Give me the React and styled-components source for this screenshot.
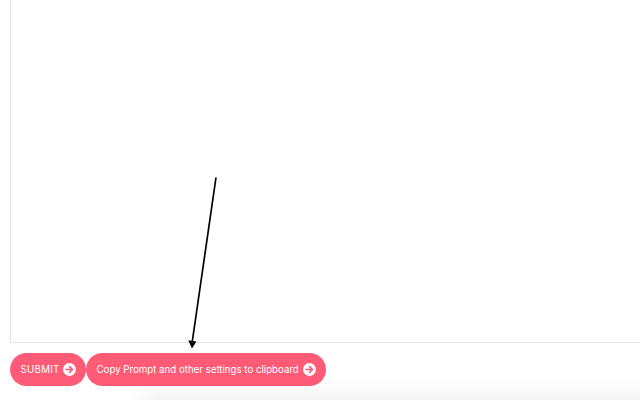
import { createGlobalStyle, styled } from "styled-components";

const GlobalStyle = createGlobalStyle`
  html, body {
    margin: 0;
    height: 100%;
    background: #fff;
    overflow: hidden;
  }
`;

const Page = styled.div`
  position: relative;
  width: 640px;
  height: 400px;
  overflow: hidden;
  padding-left: 10px;
  box-sizing: border-box;
  display: flex;
  flex-direction: column;
  font-family: Inter, "Liberation Sans", sans-serif;
`;

const Canvas = styled.div`
  height: 343px;
  box-sizing: border-box;
  border-left: 1px solid #e6e6e6;
  border-bottom: 1px solid #e6e6e6;
`;

const Actions = styled.div`
  display: flex;
  margin-top: 10px;
`;

const PillButton = styled.button`
  display: flex;
  align-items: center;
  gap: 5px;
  height: 33px;
  width: ${props => props.$width}px;
  padding: 0 10px;
  box-sizing: border-box;
  border: 0;
  border-radius: 17px;
  background: #ff5b76;
  color: #fff;
  font-family: inherit;
  font-size: 9.7px;
  font-weight: 400;
  white-space: nowrap;
`;

const Label = styled.span`
  flex: 1;
  min-width: 0;
  text-align: left;
  padding-left: 0.5px;
  letter-spacing: ${props => props.$spacing}px;
`;

const BottomShade = styled.div`
  position: absolute;
  left: 150px;
  right: -40px;
  top: 404px;
  height: 20px;
  box-shadow: 0 0 22px 6px rgba(0, 0, 0, 0.09);
`;

const ArrowNote = styled.svg`
  position: absolute;
  left: 180px;
  top: 170px;
`;

const ArrowCircle = () => (
  <svg width="13" height="13" viewBox="0 0 13 13" style={{ flexShrink: 0 }}>
    <circle cx="6.5" cy="6.5" r="6.5" fill="#fff" />
    <path
      d="M3 6.5h6.2M6.6 3.6l2.9 2.9-2.9 2.9"
      fill="none"
      stroke="#ff5b76"
      strokeWidth="1.6"
      strokeLinecap="round"
      strokeLinejoin="round"
    />
  </svg>
);

const App = () => {
  return (
    <>
      <GlobalStyle />
      <Page>
        <Canvas />
        <Actions>
          <PillButton $width={76}>
            <Label $spacing={0.3}>SUBMIT</Label>
            <ArrowCircle />
          </PillButton>
          <PillButton $width={240}>
            <Label $spacing={0}>Copy Prompt and other settings to clipboard</Label>
            <ArrowCircle />
          </PillButton>
        </Actions>
        <BottomShade />
        <ArrowNote width="50" height="182" viewBox="0 0 50 182">
          <path d="M36 7.5L12.2 172" fill="none" stroke="#000" strokeWidth="1.7" />
          <path d="M12 178.5L8.2 170.3L16.4 171.5Z" fill="#000" />
        </ArrowNote>
      </Page>
    </>
  );
};

export default App;
